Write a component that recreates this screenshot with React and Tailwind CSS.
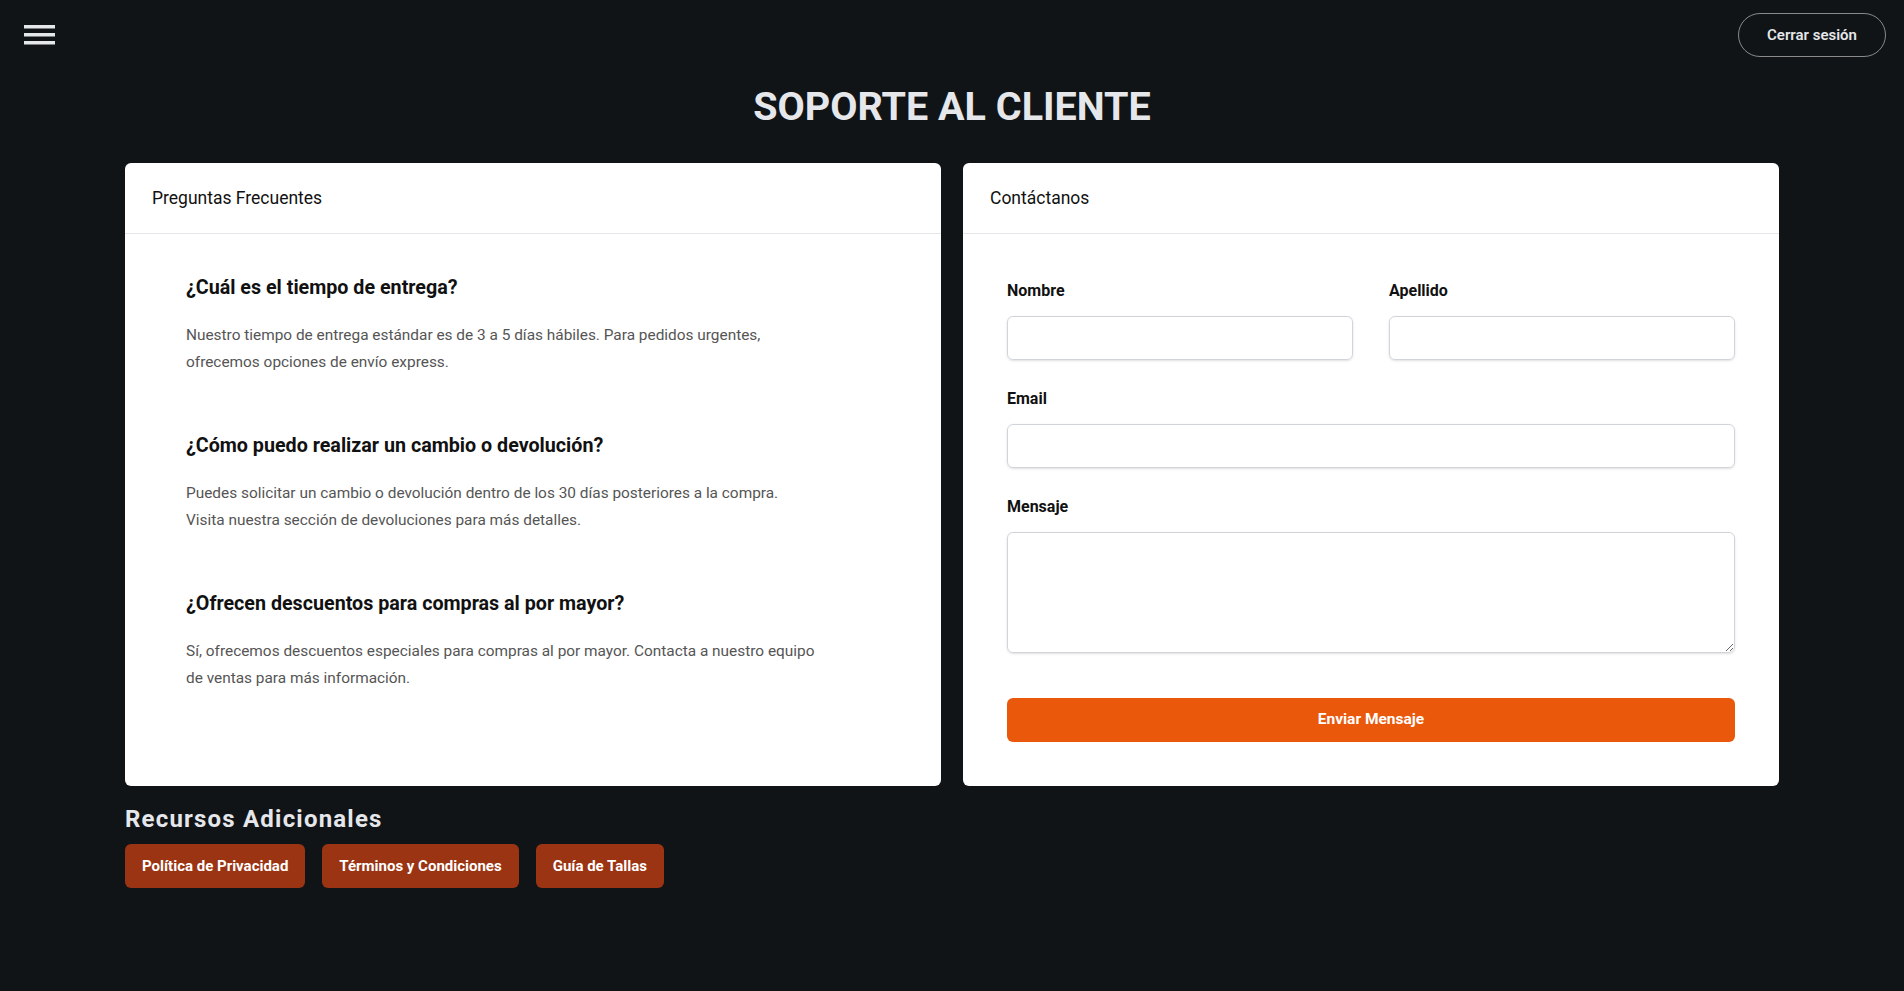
export default function App() {
  const faqs = [
    {
      q: '¿Cuál es el tiempo de entrega?',
      a: 'Nuestro tiempo de entrega estándar es de 3 a 5 días hábiles. Para pedidos urgentes, ofrecemos opciones de envío express.',
    },
    {
      q: '¿Cómo puedo realizar un cambio o devolución?',
      a: 'Puedes solicitar un cambio o devolución dentro de los 30 días posteriores a la compra. Visita nuestra sección de devoluciones para más detalles.',
    },
    {
      q: '¿Ofrecen descuentos para compras al por mayor?',
      a: 'Sí, ofrecemos descuentos especiales para compras al por mayor. Contacta a nuestro equipo de ventas para más información.',
    },
  ];

  const recursos = ['Política de Privacidad', 'Términos y Condiciones', 'Guía de Tallas'];

  return (
    <div className="min-h-screen bg-[#111416] font-['Roboto',sans-serif] text-[#e5e7eb]">
      {/* Top bar */}
      <header className="flex items-center justify-between pl-6 pr-[18px] pt-[13px]">
        <button className="flex h-[20px] w-[31px] items-center">
          <svg width="31" height="20" viewBox="0 0 31 20">
            <rect x="0" y="0" width="31" height="3.5" fill="#e5e7eb" />
            <rect x="0" y="8" width="31" height="3.5" fill="#e5e7eb" />
            <rect x="0" y="16" width="31" height="3.5" fill="#e5e7eb" />
          </svg>
        </button>
        <button className="h-[44px] w-[148px] rounded-full border border-[#8a8a8a] text-[15px] font-semibold text-[#e5e7eb]">
          Cerrar sesión
        </button>
      </header>

      <h1 className="mt-[26px] text-center text-[39.5px] font-bold leading-[48px] text-[#e5e7eb]">
        SOPORTE AL CLIENTE
      </h1>

      <main className="mx-auto mt-8 w-[1654px]">
        <div className="grid grid-cols-2 gap-[22px]">
          {/* FAQ card */}
          <div className="rounded-md bg-white text-gray-900">
            <div className="border-b border-[#e5e7eb] px-[27px] py-[21px] text-[17.5px] leading-7 text-[#111]">
              Preguntas Frecuentes
            </div>
            <div className="space-y-[56px] pl-[61px] pt-[40px]">
              {faqs.map(f => (
                <div key={f.q}>
                  <h3 className="mb-5 text-[19.7px] font-bold leading-7 text-[#111]">{f.q}</h3>
                  <p className="max-w-[634px] text-[15.4px] leading-[27px] text-[#555]">{f.a}</p>
                </div>
              ))}
            </div>
          </div>

          {/* Contact card */}
          <div className="rounded-md bg-white text-gray-900">
            <div className="border-b border-[#e5e7eb] px-[27px] py-[21px] text-[17.5px] leading-7 text-[#111]">
              Contáctanos
            </div>
            <form className="px-[44px] pb-[44px] pt-[45px]" onSubmit={e => e.preventDefault()}>
              <div className="grid grid-cols-2 gap-x-[36px]">
                <div>
                  <label className="mb-[13px] block text-base font-bold leading-6 text-[#111]">Nombre</label>
                  <input className="h-[44px] w-full rounded-md border border-[#d1d5db] px-3 shadow-sm" />
                </div>
                <div>
                  <label className="mb-[13px] block text-base font-bold leading-6 text-[#111]">Apellido</label>
                  <input className="h-[44px] w-full rounded-md border border-[#d1d5db] px-3 shadow-sm" />
                </div>
              </div>
              <div className="mt-[27px]">
                <label className="mb-[13px] block text-base font-bold leading-6 text-[#111]">Email</label>
                <input className="h-[44px] w-full rounded-md border border-[#d1d5db] px-3 shadow-sm" />
              </div>
              <div className="mt-[27px]">
                <label className="mb-[13px] block text-base font-bold leading-6 text-[#111]">Mensaje</label>
                <textarea className="block h-[121px] w-full rounded-md border border-[#d1d5db] px-3 py-2 shadow-sm" />
              </div>
              <button className="mt-[45px] h-[44px] w-full rounded-md bg-[#ea580c] text-[15.5px] font-bold text-white">
                Enviar Mensaje
              </button>
            </form>
          </div>
        </div>

        {/* Recursos */}
        <h2 className="mt-[17px] text-2xl font-bold leading-8 tracking-wider text-[#e5e7eb]">Recursos Adicionales</h2>
        <div className="mt-[9px] flex gap-[17px]">
          {recursos.map(r => (
            <button key={r} className="h-[44px] rounded-md bg-[#9a3412] px-[17px] text-[15px] font-bold text-white">
              {r}
            </button>
          ))}
        </div>
      </main>
    </div>
  );
}
